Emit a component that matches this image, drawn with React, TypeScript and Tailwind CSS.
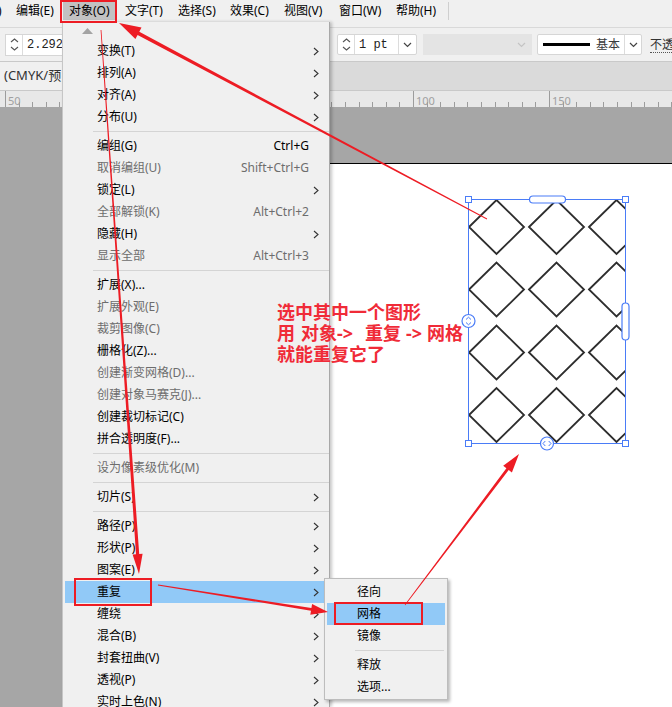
import React from "react";

type MI = { t: string; s?: string; sub?: boolean; dis?: boolean; hl?: boolean } | null;

const MENU: MI[] = [
  { t: "变换(T)", sub: true },
  { t: "排列(A)", sub: true },
  { t: "对齐(A)", sub: true },
  { t: "分布(U)", sub: true },
  null,
  { t: "编组(G)", s: "Ctrl+G" },
  { t: "取消编组(U)", s: "Shift+Ctrl+G", dis: true },
  { t: "锁定(L)", sub: true },
  { t: "全部解锁(K)", s: "Alt+Ctrl+2", dis: true },
  { t: "隐藏(H)", sub: true },
  { t: "显示全部", s: "Alt+Ctrl+3", dis: true },
  null,
  { t: "扩展(X)..." },
  { t: "扩展外观(E)", dis: true },
  { t: "裁剪图像(C)", dis: true },
  { t: "栅格化(Z)..." },
  { t: "创建渐变网格(D)...", dis: true },
  { t: "创建对象马赛克(J)...", dis: true },
  { t: "创建裁切标记(C)" },
  { t: "拼合透明度(F)..." },
  null,
  { t: "设为像素级优化(M)", dis: true },
  null,
  { t: "切片(S)", sub: true },
  null,
  { t: "路径(P)", sub: true },
  { t: "形状(P)", sub: true },
  { t: "图案(E)", sub: true },
  { t: "重复", sub: true, hl: true },
  { t: "缠绕", sub: true },
  { t: "混合(B)", sub: true },
  { t: "封套扭曲(V)", sub: true },
  { t: "透视(P)", sub: true },
  { t: "实时上色(N)", sub: true },
];

const SUB: MI[] = [
  { t: "径向" },
  { t: "网格", hl: true },
  { t: "镜像" },
  null,
  { t: "释放" },
  { t: "选项..." },
];

const TOP = [
  { t: "编辑(E)", w: "w-[45px]" },
  { t: "对象(O)", w: "w-[56px]", active: true },
  { t: "", w: "w-[8px]" },
  { t: "文字(T)", w: "w-[53px]" },
  { t: "选择(S)", w: "w-[52px]" },
  { t: "效果(C)", w: "w-[54px]" },
  { t: "视图(V)", w: "w-[55px]" },
  { t: "窗口(W)", w: "w-[57px]" },
  { t: "帮助(H)", w: "w-[52px]" },
];

const Chev = () => (
  <svg width="6" height="9" viewBox="0 0 6 9">
    <path d="M1 1 L5 4.5 L1 8" fill="none" stroke="#333" strokeWidth="1.1" />
  </svg>
);

const Down = ({ c = "#444" }: { c?: string }) => (
  <svg width="9" height="6" viewBox="0 0 9 6">
    <path d="M1 1 L4.5 4.5 L8 1" fill="none" stroke={c} strokeWidth="1.2" />
  </svg>
);

const UpDown = () => (
  <div className="w-[17px] shrink-0 h-full flex flex-col items-center justify-center gap-[3px] border-r border-[#dcdcdc]">
    <svg width="9" height="5" viewBox="0 0 9 5">
      <path d="M1 4 L4.5 1 L8 4" fill="none" stroke="#555" strokeWidth="1.1" />
    </svg>
    <svg width="9" height="5" viewBox="0 0 9 5">
      <path d="M1 1 L4.5 4 L8 1" fill="none" stroke="#555" strokeWidth="1.1" />
    </svg>
  </div>
);

function arrow(
  x1: number,
  y1: number,
  x2: number,
  y2: number,
  w0: number,
  w1: number,
  L: number,
  W: number
) {
  const dx = x2 - x1;
  const dy = y2 - y1;
  const len = Math.hypot(dx, dy);
  const ux = dx / len;
  const uy = dy / len;
  const nx = -uy;
  const ny = ux;
  const bx = x2 - ux * L;
  const by = y2 - uy * L;
  const pts = [
    [x1 + (nx * w0) / 2, y1 + (ny * w0) / 2],
    [bx + (nx * w1) / 2, by + (ny * w1) / 2],
    [bx + (nx * W) / 2, by + (ny * W) / 2],
    [x2, y2],
    [bx - (nx * W) / 2, by - (ny * W) / 2],
    [bx - (nx * w1) / 2, by - (ny * w1) / 2],
    [x1 - (nx * w0) / 2, y1 - (ny * w0) / 2],
  ];
  return pts.map((p) => p[0].toFixed(1) + "," + p[1].toFixed(1)).join(" ");
}

function MenuRow({ it, sub }: { it: MI; sub?: boolean }) {
  if (!it) {
    return (
      <div className={`h-[7px] flex items-center ${sub ? "pl-[30px] pr-[3px]" : "pl-[30px]"}`}>
        <div className="h-px w-full bg-[#d4d4d4]" />
      </div>
    );
  }
  const base = sub
    ? it.hl
      ? "mx-[2px] pl-[30px] bg-[#91c9f7]"
      : "pl-[32px]"
    : it.hl
    ? "ml-[2px] mr-px pl-[32px] pr-[5px] bg-[#91c9f7]"
    : "pl-[34px] pr-[6px]";
  return (
    <div className={`h-[22px] flex items-center ${base}`}>
      <span className={`flex-1 whitespace-nowrap ${it.dis ? "text-[#6d6d6d]" : "text-black"}`}>{it.t}</span>
      {it.s && <span className={`whitespace-nowrap ${it.dis ? "text-[#6d6d6d]" : "text-black"}`}>{it.s}</span>}
      {!sub && <span className="w-[14px] pl-[4px] flex items-center">{it.sub && <Chev />}</span>}
    </div>
  );
}

const ticks: number[] = [];
for (let i = 0; i < 50; i++) ticks.push(5 + i * 13.6);

const diamonds: [number, number][] = [];
[227, 289.5, 352.5, 415].forEach((cy) =>
  [496.5, 556.5, 616.5].forEach((cx) => diamonds.push([cx, cy]))
);

export default function App() {
  const blue = "#4a7cf7";
  const red = "#ed1c24";
  return (
    <div className="relative w-[672px] h-[707px] overflow-hidden flex flex-col bg-[#a6a6a6] font-['Noto_Sans','Noto_Sans_CJK_SC',sans-serif] text-[12px] text-black">
      {/* menu bar */}
      <div className="h-[28px] shrink-0 bg-[#f0f0f0] border-b border-[#d9d9d9] flex items-start">
        <div className="w-[16px] shrink-0 h-[22px] flex items-center overflow-hidden">
          <span className="-ml-[2px]">)</span>
        </div>
        {TOP.map((m, i) =>
          m.active ? (
            <div key={i} className={`${m.w} shrink-0 h-[22px] p-[2px]`}>
              <div className="h-full bg-[#c2c2c2] flex items-center pl-[6px] whitespace-nowrap">{m.t}</div>
            </div>
          ) : (
            <div key={i} className={`${m.w} shrink-0 h-[22px] flex items-center whitespace-nowrap`}>{m.t}</div>
          )
        )}
        <div className="w-px shrink-0 h-[18px] mt-[2px] bg-[#cfcfcf]" />
      </div>

      {/* toolbar */}
      <div className="h-[33px] shrink-0 bg-[#f0f0f0] flex items-center overflow-hidden">
        <div className="ml-[5px] shrink-0 w-[70px] h-[22px] flex border border-[#d6d6d6] bg-white">
          <UpDown />
          <div className="flex-1 flex items-center pl-[4px] font-['Liberation_Mono',monospace] text-[12px] text-[#222]">2.292</div>
        </div>
        <div className="ml-[262px] shrink-0 w-[80px] h-[21px] flex border border-[#d6d6d6] bg-white rounded-[2px]">
          <UpDown />
          <div className="flex-1 flex items-center pl-[4px] font-['Liberation_Mono',monospace] text-[12px] text-[#222]">1 pt</div>
          <div className="w-[18px] shrink-0 flex items-center justify-center border-l border-[#dcdcdc]">
            <Down />
          </div>
        </div>
        <div className="ml-[6px] shrink-0 w-[109px] h-[21px] bg-[#e4e4e4] flex items-center justify-end pr-[6px]">
          <Down c="#c4c4c4" />
        </div>
        <div className="ml-[5px] shrink-0 w-[105px] h-[21px] flex border border-[#d6d6d6] bg-white rounded-[2px]">
          <div className="flex-1 flex items-center pl-[5px]">
            <div className="w-[47px] shrink-0 h-[3px] bg-black" />
            <span className="ml-[6px] text-[#3a3a3a] whitespace-nowrap">基本</span>
          </div>
          <div className="w-[17px] shrink-0 flex items-center justify-center border-l border-[#dcdcdc]">
            <Down />
          </div>
        </div>
        <div className="ml-[8px] shrink-0 whitespace-nowrap text-[#333] border-b border-dotted border-[#555] leading-[15px]">不透明度</div>
      </div>

      {/* tab row */}
      <div className="h-[30px] shrink-0 bg-[#dadada] border-y border-[#c9c9c9] flex">
        <div className="w-[250px] h-full bg-[#f0f0f0] flex items-center pl-[4px] text-[13px] text-[#333] whitespace-nowrap">
          (CMYK/预览)
        </div>
      </div>

      {/* ruler */}
      <div className="h-[16px] shrink-0 bg-[#e8e8e8]">
        <svg width="672" height="16" viewBox="0 0 672 16">
          {ticks.map((x, i) => (
            <line
              key={i}
              x1={Math.round(x) + 0.5}
              x2={Math.round(x) + 0.5}
              y1={i % 10 === 0 ? 0 : 11}
              y2={16}
              stroke="#9c9c9c"
              strokeWidth="1"
            />
          ))}
          <text x="8" y="14" fontSize="11" fill="#a0a0a0" fontFamily="Noto Sans, sans-serif">50</text>
          <text x="416" y="14" fontSize="11" fill="#a0a0a0" fontFamily="Noto Sans, sans-serif">100</text>
          <text x="552" y="14" fontSize="11" fill="#a0a0a0" fontFamily="Noto Sans, sans-serif">150</text>
        </svg>
      </div>

      {/* canvas */}
      <div className="relative flex-1 bg-[#a6a6a6]">
        <div className="absolute left-[150px] top-[56px] right-0 bottom-0 bg-white border-t border-black" />
        <svg className="absolute left-[460px] top-[85px]" width="175" height="260" viewBox="460 192 175 260">
          <defs>
            <clipPath id="pc">
              <rect x="468" y="199" width="157.5" height="244" />
            </clipPath>
          </defs>
          <g clipPath="url(#pc)" fill="none" stroke="#2e2e2e" strokeWidth="1.8">
            {diamonds.map(([cx, cy], i) => (
              <path key={i} d={`M${cx - 27.5} ${cy} L${cx} ${cy - 27} L${cx + 27.5} ${cy} L${cx} ${cy + 27} Z`} />
            ))}
          </g>
          <rect x="468.5" y="199.5" width="157" height="244" fill="none" stroke={blue} strokeWidth="1" />
          {[
            [468.5, 199.5],
            [625.5, 199.5],
            [468.5, 443.5],
            [625.5, 443.5],
          ].map(([x, y], i) => (
            <rect key={i} x={x - 3} y={y - 3} width="6" height="6" fill="white" stroke={blue} strokeWidth="1" />
          ))}
          <rect x="529.5" y="196" width="36" height="7" rx="3.5" fill="white" stroke={blue} strokeWidth="1.2" />
          <rect x="622" y="303" width="7" height="37" rx="3.5" fill="white" stroke={blue} strokeWidth="1.2" />
          <circle cx="468.5" cy="321" r="6.5" fill="white" stroke={blue} strokeWidth="1.2" />
          <path d="M466 319.5 L468.5 317.2 L471 319.5 M466 322.5 L468.5 324.8 L471 322.5" fill="none" stroke={blue} strokeWidth="1" />
          <circle cx="547" cy="443.5" r="6.5" fill="white" stroke={blue} strokeWidth="1.2" />
          <path d="M545.3 441 L543 443.5 L545.3 446 M548.7 441 L551 443.5 L548.7 446" fill="none" stroke={blue} strokeWidth="1" />
        </svg>
      </div>

      {/* object menu */}
      <div className="absolute left-[62px] top-[22px] w-[268px] bottom-0 bg-[#f0f0f0] border-l border-l-[#c6c6c6] border-r border-r-[#a8a8a8] shadow-[2px_0_3px_rgba(0,0,0,0.22)]">
        <div className="h-[18px] flex items-center pl-[19px]">
          <svg width="11" height="6" viewBox="0 0 11 6">
            <path d="M0 6 L5.5 0 L11 6 Z" fill="#a3a3a3" />
          </svg>
        </div>
        {MENU.map((it, i) => (
          <MenuRow key={i} it={it} />
        ))}
      </div>

      {/* submenu */}
      <div className="absolute left-[324px] top-[578px] w-[124px] h-[122px] bg-[#f0f0f0] border border-[#bdbdbd] pt-[2px] shadow-[2px_2px_3px_rgba(0,0,0,0.28)]">
        {SUB.map((it, i) => (
          <MenuRow key={i} it={it} sub />
        ))}
      </div>

      {/* annotation */}
      <div className="absolute left-[277px] top-[302px] text-[18px] leading-[21px] font-bold text-[#f02b38] font-['Noto_Sans','Noto_Sans_CJK_SC',sans-serif] whitespace-nowrap">
        <div>选中其中一个图形</div>
        <div className="flex items-center">
          <span>用</span>
          <span className="ml-[6px]">对象</span>
          <span className="w-[16px]">-&gt;</span>
          <span className="ml-[12px]">重复</span>
          <span className="ml-[5px] w-[16px]">-&gt;</span>
          <span className="ml-[5px]">网格</span>
        </div>
        <div>就能重复它了</div>
      </div>

      {/* red boxes */}
      <div className="absolute left-[60px] top-0 w-[57px] h-[23px] border-2 border-[#ed1c24]" />
      <div className="absolute left-[74px] top-[578px] w-[78px] h-[28px] border-2 border-[#ed1c24]" />
      <div className="absolute left-[334px] top-[602px] w-[89px] h-[23px] border-2 border-[#ed1c24]" />

      {/* arrows */}
      <svg className="absolute left-0 top-0 pointer-events-none" width="672" height="707" viewBox="0 0 672 707">
        <polygon points={arrow(487, 219, 119, 23, 0.8, 3.6, 22, 13)} fill={red} />
        <polygon points={arrow(101, 30, 139, 574, 0.8, 3.2, 20, 10)} fill={red} />
        <polygon points={arrow(158, 585, 328, 612, 0.8, 3, 17, 11)} fill={red} />
        <polygon points={arrow(405, 605, 519, 454, 0.8, 3, 19, 11)} fill={red} />
      </svg>
    </div>
  );
}
